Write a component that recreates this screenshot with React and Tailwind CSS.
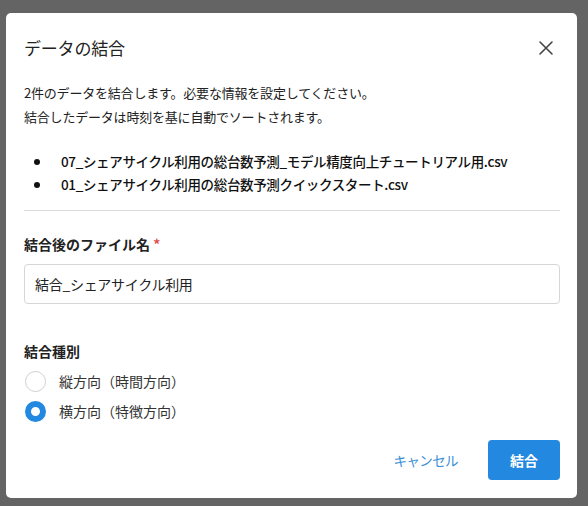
import React from "react";

export default function App() {
  return (
    <div
      className="w-[588px] h-[506px] bg-[#646464] pt-[13px] pl-[6px]"
      style={{ fontFamily: '"Noto Sans CJK JP", "Noto Sans", sans-serif' }}
    >
      <div className="w-[571px] h-[485px] bg-white rounded-[5px] flex flex-col pl-[18px] pr-[17px] text-[#222]">
        <div className="flex items-center justify-between h-[68px] pt-[1px]">
          <div className="text-[17px] tracking-[-0.2px] text-[#222]">データの結合</div>
          <svg width="16" height="16" viewBox="0 0 16 16" className="mr-[6px]">
            <path d="M2 2 L14 14 M14 2 L2 14" stroke="#444" strokeWidth="1.6" strokeLinecap="round" />
          </svg>
        </div>
        <div className="text-[13px] leading-[24px] tracking-[-0.2px] text-[#222]">
          <div>2件のデータを結合します。必要な情報を設定してください。</div>
          <div>結合したデータは時刻を基に自動でソートされます。</div>
        </div>
        <ul className="mt-[21px] text-[13.5px] leading-[23px] font-medium tracking-[-0.35px] text-[#111]">
          <li className="flex items-center">
            <span className="w-[6px] h-[6px] rounded-full bg-[#111] ml-[10px] mr-[21px]" />
            07_シェアサイクル利用の総台数予測_モデル精度向上チュートリアル用.csv
          </li>
          <li className="flex items-center">
            <span className="w-[6px] h-[6px] rounded-full bg-[#111] ml-[10px] mr-[21px]" />
            01_シェアサイクル利用の総台数予測クイックスタート.csv
          </li>
        </ul>
        <div className="h-px bg-[#d9d9d9] mt-[14px]" />
        <div className="mt-[23px] text-[14px] font-bold leading-[20px] text-[#222]">
          結合後のファイル名 <span className="text-[#e05050]">*</span>
        </div>
        <div className="mt-[10px] h-[40px] border border-[#d6d6d6] rounded-[4px] flex items-center px-[10px] text-[14px] tracking-[-0.3px] text-[#222]">
          結合_シェアサイクル利用
        </div>
        <div className="mt-[37px] text-[14px] font-bold leading-[20px] text-[#222]">結合種別</div>
        <div className="mt-[9px] flex items-center h-[22px]">
          <span className="w-[21px] h-[21px] rounded-full border border-[#d0d0d0] ml-[1px]" />
          <span className="ml-[13px] text-[14px] text-[#333]">縦方向（時間方向）</span>
        </div>
        <div className="mt-[8px] flex items-center h-[22px]">
          <span className="w-[21px] h-[21px] rounded-full border-[6px] border-[#2288e0] ml-[1px]" />
          <span className="ml-[13px] text-[14px] text-[#333]">横方向（特徴方向）</span>
        </div>
        <div className="mt-[18px] flex justify-end items-center">
          <div className="text-[13.5px] tracking-[-0.6px] text-[#3b8fd6] mr-[30px]">キャンセル</div>
          <div className="w-[72px] h-[40px] rounded-[4px] bg-[#2288e0] text-white text-[14px] font-bold flex items-center justify-center">
            結合
          </div>
        </div>
      </div>
    </div>
  );
}
